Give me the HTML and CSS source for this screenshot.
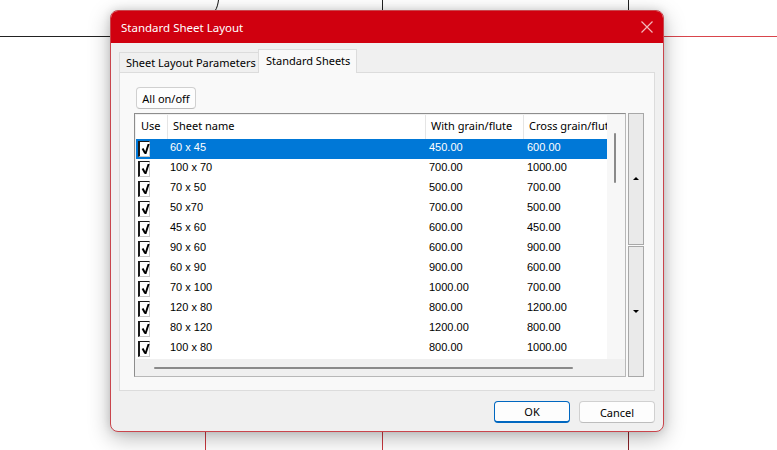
FILE: index.html
```html
<!DOCTYPE html>
<html>
<head>
<meta charset="utf-8">
<link rel="stylesheet" href="styles.css">
</head>
<body>
<div class="desktop">
  <div class="line h-left"></div>
  <div class="line h-right"></div>
  <div class="line v-top1"></div>
  <div class="line v-top2"></div>
  <svg class="curve" width="8" height="12" viewBox="0 0 8 12"><path d="M6.5 0 C6 4 5 8 3 11" fill="none" stroke="#111" stroke-width="1"/></svg>
  <div class="line v-bot1"></div>
  <div class="line v-bot2"></div>
  <div class="line v-bot3"></div>

  <div class="dialog">
    <div class="titlebar">
      <span class="title">Standard Sheet Layout</span>
      <svg class="close" width="12" height="12" viewBox="0 0 12 12"><path d="M0.5 0.5 L11.5 11.5 M11.5 0.5 L0.5 11.5" stroke="#f3b7bb" stroke-width="1.2"/></svg>
    </div>
    <div class="body">
      <div class="tabs">
        <div class="tab">Sheet Layout Parameters</div>
        <div class="tab active">Standard Sheets</div>
      </div>
      <div class="panel">
        <button class="btn small">All on/off</button>
        <div class="listrow">
          <div class="list">
            <div class="list-inner">
              <div class="grid">
                <div class="hdr"><div class="c use">Use</div><div class="c name">Sheet name</div><div class="c with">With grain/flute</div><div class="c cross">Cross grain/flute</div></div>
                <div class="row sel"><div class="c use"><span class="chk"></span></div><div class="c name">60 x 45</div><div class="c with">450.00</div><div class="c cross">600.00</div></div>
                <div class="row"><div class="c use"><span class="chk"></span></div><div class="c name">100 x 70</div><div class="c with">700.00</div><div class="c cross">1000.00</div></div>
                <div class="row"><div class="c use"><span class="chk"></span></div><div class="c name">70 x 50</div><div class="c with">500.00</div><div class="c cross">700.00</div></div>
                <div class="row"><div class="c use"><span class="chk"></span></div><div class="c name">50 x70</div><div class="c with">700.00</div><div class="c cross">500.00</div></div>
                <div class="row"><div class="c use"><span class="chk"></span></div><div class="c name">45 x 60</div><div class="c with">600.00</div><div class="c cross">450.00</div></div>
                <div class="row"><div class="c use"><span class="chk"></span></div><div class="c name">90 x 60</div><div class="c with">600.00</div><div class="c cross">900.00</div></div>
                <div class="row"><div class="c use"><span class="chk"></span></div><div class="c name">60 x 90</div><div class="c with">900.00</div><div class="c cross">600.00</div></div>
                <div class="row"><div class="c use"><span class="chk"></span></div><div class="c name">70 x 100</div><div class="c with">1000.00</div><div class="c cross">700.00</div></div>
                <div class="row"><div class="c use"><span class="chk"></span></div><div class="c name">120 x 80</div><div class="c with">800.00</div><div class="c cross">1200.00</div></div>
                <div class="row"><div class="c use"><span class="chk"></span></div><div class="c name">80 x 120</div><div class="c with">1200.00</div><div class="c cross">800.00</div></div>
                <div class="row"><div class="c use"><span class="chk"></span></div><div class="c name">100 x 80</div><div class="c with">800.00</div><div class="c cross">1000.00</div></div>
              </div>
              <div class="vscroll"><div class="vthumb"></div></div>
            </div>
            <div class="hscroll"><div class="hthumb"></div></div>
          </div>
          <div class="spin">
            <div class="spin-btn"><span class="tri up"></span></div>
            <div class="spin-btn"><span class="tri down"></span></div>
          </div>
        </div>
      </div>
      <div class="footer">
        <button class="btn ok">OK</button>
        <button class="btn">Cancel</button>
      </div>
    </div>
  </div>
</div>
</body>
</html>
```

FILE: styles.css
```css
* { box-sizing: border-box; }
html, body { margin: 0; padding: 0; background: #fff; }
body { font-family: "Noto Sans", "Open Sans", sans-serif; font-size: 11px; color: #000; }

.desktop { position: relative; width: 777px; height: 450px; overflow: hidden; background: #fff; }

.line { position: absolute; }
.h-left { left: 0; top: 36px; width: 115px; height: 1px; background: #222; }
.h-right { left: 660px; top: 36px; width: 117px; height: 1px; background: #d9454c; }
.v-top1 { left: 382px; top: 0; width: 1px; height: 12px; background: #222; }
.v-top2 { left: 628px; top: 0; width: 1px; height: 12px; background: #222; }
.curve { position: absolute; left: 212px; top: 0; }
.v-bot1 { left: 205px; top: 428px; width: 1px; height: 22px; background: #c9383f; }
.v-bot2 { left: 382px; top: 428px; width: 1px; height: 22px; background: #c9383f; }
.v-bot3 { left: 628px; top: 428px; width: 1px; height: 22px; background: #8a2228; }

.dialog {
  position: absolute; left: 110px; top: 10px; width: 554px; height: 422px;
  border: 1px solid #c9454c; border-radius: 8px; background: #f0f0f0;
  box-shadow: 0 6px 22px rgba(0,0,0,0.28), 0 0 8px rgba(0,0,0,0.12);
  display: flex; flex-direction: column; overflow: hidden;
}
.titlebar {
  height: 32px; flex: none; background: #d0000f; color: #fff;
  display: flex; align-items: center; justify-content: space-between;
  padding: 0 10px 0 10px;
}
.title { font-size: 11.5px; }

.body { flex: 1; display: flex; flex-direction: column; padding: 6px 8px 0 8px; }

.tabs { display: flex; align-items: flex-end; height: 23px; }
.tab {
  height: 20px; padding: 0 0 0 6px; line-height: 19px; font-size: 11px;
  border: 1px solid #dcdcdc; border-bottom: none; border-right: none; background: #f0f0f0;
  width: 139px; white-space: nowrap;
}
.tab.active {
  height: 24px; line-height: 21px; background: #f9f9f9; width: 99px;
  border-right: 1px solid #dcdcdc; padding-left: 7px; position: relative; margin-bottom: -1px;
}

.panel {
  height: 319px; border: 1px solid #dcdcdc; background: #f9f9f9;
  padding: 14px 10px 0 14px; display: flex; flex-direction: column;
}

.btn {
  font-family: "Noto Sans", "Open Sans", sans-serif; font-size: 11px; color: #000;
  background: #fdfdfd; border: 1px solid #d0d0d0; border-bottom-color: #bdbdbd;
  border-radius: 4px; padding: 0; height: 22px; width: 76px;
}
.btn.small { width: 60px; height: 22px; margin-left: 2px; }

.listrow { display: flex; margin-top: 4px; gap: 1px; }
.list {
  width: 492px; height: 264px; border: 1px solid #8d8d8d; border-right-color: #b8b8b8; border-bottom-color: #b8b8b8;
  background: #f0f0f0; display: flex; flex-direction: column; padding: 1px 0 0 1px;
}
.list-inner { display: flex; height: 245px; }
.grid { width: 471px; background: #fff; }
.hdr, .row { display: flex; height: 20px; align-items: center; }
.hdr { height: 24px; }
.hdr .c { height: 24px; line-height: 22px; border-right: 1px solid #e5e5e5; padding-left: 5px; font-size: 11px; }
.c { white-space: nowrap; overflow: hidden; }
.c.use { width: 32px; }
.c.name { width: 258px; }
.c.with { width: 98px; }
.c.cross { width: 83px; }
.hdr .c.name { padding-left: 5px; }
.hdr .c.cross { border-right: none; }
.row .c { font-family: "Liberation Sans", Arial, sans-serif; font-size: 11px; height: 20px; line-height: 16px; }
.row .c.name { padding-left: 2px; }
.row .c.with { padding-left: 3px; }
.row .c.cross { padding-left: 3px; }
.row .c.use { padding-left: 2px; display: flex; align-items: center; }
.row.sel { background: #0078d7; color: #fff; height: 20px; }

.chk {
  display: block; width: 12px; height: 16px; background: #fff;
  border-left: 2px solid #1a1a1a; border-top: 1px solid #1a1a1a;
  border-right: 1px solid #c8c8c8; border-bottom: 1px solid #c8c8c8;
  position: relative;
}
.chk::after {
  content: ""; position: absolute; left: 2px; top: 2px; width: 4px; height: 10px;
  border-right: 2px solid #000; transform: skewX(-18deg);
}
.chk::before {
  content: ""; position: absolute; left: 0px; top: 7px; width: 3px; height: 5px;
  border-right: 2px solid #000; transform: rotate(-30deg);
}

.vscroll { width: 18px; background: #f7f7f7; position: relative; }
.vthumb { width: 2px; height: 50px; background: #8a8a8a; margin: 18px 0 0 7px; border-radius: 1px; }
.hscroll { height: 17px; display: flex; align-items: center; padding-left: 18px; }
.hthumb { width: 419px; height: 2px; background: #8a8a8a; border-radius: 1px; }

.spin { width: 16px; height: 264px; display: flex; flex-direction: column; margin-left: 1px; }
.spin-btn {
  flex: 1; border: 1px solid #a8a8a8; background: #eaeaea;
  display: flex; align-items: center; justify-content: center;
}
.spin-btn + .spin-btn { margin-top: 1px; }
.tri { width: 0; height: 0; border-left: 3px solid transparent; border-right: 3px solid transparent; }
.tri.up { border-bottom: 3px solid #000; }
.tri.down { border-top: 3px solid #000; }

.footer { display: flex; justify-content: flex-end; gap: 9px; padding: 10px 0 0 0; }
.btn.ok { border: 1px solid #0067c0; border-bottom-width: 2px; }
```
